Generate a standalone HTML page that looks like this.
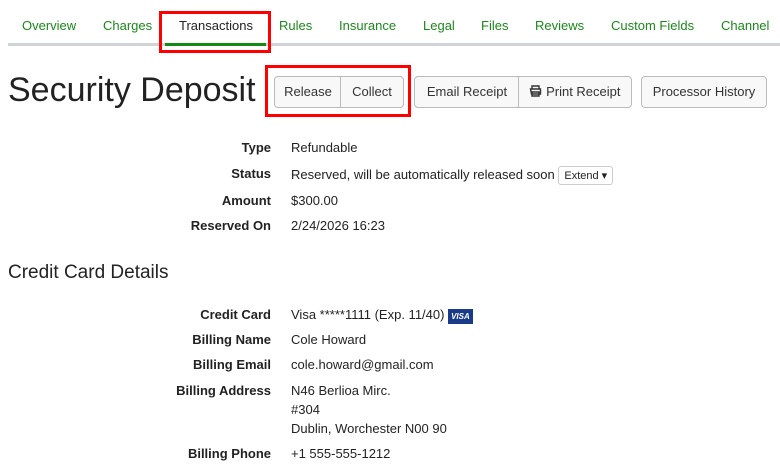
<!DOCTYPE html><html><head><style>
body{margin:0;width:780px;height:472px;overflow:hidden;background:#fff;font-family:"Liberation Sans",sans-serif;color:#222;font-size:13px;position:relative}
.a{position:absolute;white-space:nowrap}
.nav{color:#1a8a1a;font-size:13px;top:18px}
.btn{position:absolute;top:76px;height:30px;border:1px solid #bbb;background:#f8f8f8;line-height:30px;text-align:center;font-size:13px;color:#333;box-sizing:content-box}
.l{position:absolute;right:509px;font-weight:bold;font-size:13px;white-space:nowrap}
.v{position:absolute;left:291px;font-size:13px;white-space:nowrap}
.red{position:absolute;border:3px solid #f00;box-sizing:border-box}
</style></head><body>
<div class="a nav" style="left:22px">Overview</div>
<div class="a nav" style="left:103px">Charges</div>
<div class="a nav" style="left:179px;color:#222">Transactions</div>
<div class="a nav" style="left:279px">Rules</div>
<div class="a nav" style="left:339px">Insurance</div>
<div class="a nav" style="left:423px">Legal</div>
<div class="a nav" style="left:481px">Files</div>
<div class="a nav" style="left:535px">Reviews</div>
<div class="a nav" style="left:611px">Custom Fields</div>
<div class="a nav" style="left:721px">Channel</div>
<div class="a" style="left:8px;top:43px;width:772px;height:3px;background:#d0d3d8"></div>
<div class="a" style="left:165px;top:43px;width:101px;height:3px;background:#138a13"></div>
<div class="red" style="left:159px;top:11px;width:112px;height:42px"></div>
<div class="a" style="left:8px;top:71px;font-size:34px;color:#222">Security Deposit</div>
<div class="btn" style="left:274px;width:66px;border-radius:4px 0 0 4px">Release</div>
<div class="btn" style="left:340px;width:62px;border-radius:0 4px 4px 0">Collect</div>
<div class="red" style="left:265px;top:65px;width:146px;height:52px"></div>
<div class="btn" style="left:414px;width:104px;border-radius:4px 0 0 4px">Email Receipt</div>
<div class="btn" style="left:518px;width:112px;border-left:1px solid #bbb;border-radius:0 4px 4px 0"><svg width="13" height="12" viewBox="0 0 13 12" style="vertical-align:-1px"><path d="M3 4V1h7v3M1.5 4h10v5h-9z M3 7h7v4H3z" fill="none" stroke="#333" stroke-width="1.4"/></svg> Print Receipt</div>
<div class="btn" style="left:641px;width:124px;border-radius:4px">Processor History</div>
<div class="l" style="top:140px">Type</div><div class="v" style="top:140px">Refundable</div>
<div class="l" style="top:166px">Status</div><div class="v" style="top:166px">Reserved, will be automatically released soon <span style="display:inline-block;border:1px solid #ccc;border-radius:3px;font-size:11px;padding:2px 5px;vertical-align:0">Extend ▾</span></div>
<div class="l" style="top:193px">Amount</div><div class="v" style="top:193px">$300.00</div>
<div class="l" style="top:218px">Reserved On</div><div class="v" style="top:218px">2/24/2026 16:23</div>
<div class="a" style="left:8px;top:262px;font-size:19px">Credit Card Details</div>
<div class="l" style="top:307px">Credit Card</div><div class="v" style="top:307px">Visa *****1111 (Exp. 11/40) <span style="display:inline-block;background:#1a3a8a;color:#fff;font-size:8px;font-weight:bold;font-style:italic;padding:3px 3px;vertical-align:0">VISA</span></div>
<div class="l" style="top:332px">Billing Name</div><div class="v" style="top:332px">Cole Howard</div>
<div class="l" style="top:357px">Billing Email</div><div class="v" style="top:357px">cole.howard@gmail.com</div>
<div class="l" style="top:383px">Billing Address</div><div class="v" style="top:381px;line-height:19px">N46 Berlioa Mirc.<br>#304<br>Dublin, Worchester N00 90</div>
<div class="l" style="top:446px">Billing Phone</div><div class="v" style="top:446px">+1 555-555-1212</div>
</body></html>
